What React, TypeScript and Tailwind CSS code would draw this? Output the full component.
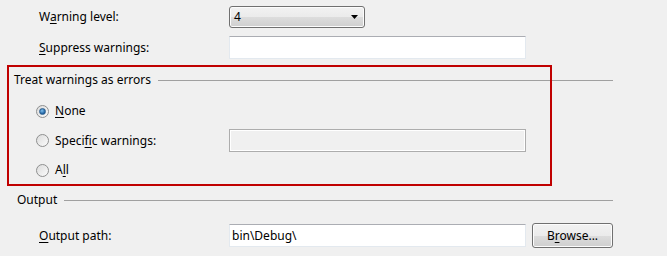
import React from 'react';

function Key({ children }: { children: React.ReactNode }) {
  return <span className="underline underline-offset-2 decoration-1">{children}</span>;
}

function Radio({ checked }: { checked?: boolean }) {
  return (
    <span className="w-[13px] h-[13px] rounded-full border border-[#8e8f8f] bg-gradient-to-br from-[#dcdcdc] to-[#fbfbfb] flex items-center justify-center shrink-0">
      {checked && (
        <span className="w-[7px] h-[7px] rounded-full bg-[radial-gradient(circle_at_40%_35%,#7fc0ee,#1c5e9e_70%)] border border-[#2d5f8e]" />
      )}
    </span>
  );
}

function TextBox({ value, disabled }: { value?: string; disabled?: boolean }) {
  if (disabled) {
    return (
      <div className="w-[297px] h-[23px] border border-[#adadad] bg-[#f0f0f0] shadow-[inset_1px_1px_0_#ffffff,inset_-1px_-1px_0_#ffffff]" />
    );
  }
  return (
    <div className="w-[297px] h-[23px] border border-[#e3e9ef] border-t-[#abadb3] bg-white flex items-center px-[2px] text-black">
      {value}
    </div>
  );
}

function Heading({ label }: { label: string }) {
  return (
    <div className="flex items-center h-[16px] pr-[54px]">
      <span>{label}</span>
      <div className="flex-1 h-px bg-[#a0a0a0] ml-[7px]" />
    </div>
  );
}

export default function App() {
  return (
    <div
      className="relative w-[667px] h-[256px] overflow-hidden bg-[#f0f0f0] text-[12px] text-black leading-none"
      style={{ fontFamily: '"Segoe UI", "Noto Sans", "Open Sans", sans-serif' }}
    >
      {/* General */}
      <div className="pt-[6px] pl-[39px] flex flex-col gap-[8px]">
        <div className="flex items-center">
          <span className="w-[190px]">
            W<Key>a</Key>rning level:
          </span>
          <div className="w-[136px] h-[22px] rounded-[3px] border border-[#707070] bg-[linear-gradient(#f2f2f2,#ebebeb_50%,#dddddd_50%,#cfcfcf)] shadow-[inset_0_0_0_1px_#fcfcfc] flex items-center pl-[4px] pr-[6px]">
            <span className="flex-1">4</span>
            <svg width="7" height="4" viewBox="0 0 7 4">
              <path d="M0 0h7L3.5 4z" fill="#000" />
            </svg>
          </div>
        </div>
        <div className="flex items-center">
          <span className="w-[190px]">
            <Key>S</Key>uppress warnings:
          </span>
          <TextBox />
        </div>
      </div>

      {/* Treat warnings as errors */}
      <div className="mt-[13px] pl-[14px]">
        <Heading label="Treat warnings as errors" />
      </div>
      <div className="pl-[36px] mt-[15px] flex flex-col">
        <div className="flex items-center h-[16px]">
          <Radio checked />
          <span className="ml-[6px]">
            <Key>N</Key>one
          </span>
        </div>
        <div className="flex items-center h-[23px] mt-[10px]">
          <Radio />
          <span className="ml-[6px] w-[174px]">
            Speci<Key>f</Key>ic warnings:
          </span>
          <TextBox disabled />
        </div>
        <div className="flex items-center h-[16px] mt-[10px]">
          <Radio />
          <span className="ml-[6px]">
            A<Key>l</Key>l
          </span>
        </div>
      </div>

      {/* Output */}
      <div className="mt-[14px] pl-[17px]">
        <Heading label="Output" />
      </div>
      <div className="mt-[15px] pl-[39px] flex items-center">
        <span className="w-[190px]">
          <Key>O</Key>utput path:
        </span>
        <TextBox value="bin\Debug\" />
        <button className="ml-[6px] w-[81px] h-[25px] rounded-[3px] border border-[#707070] bg-[linear-gradient(#f2f2f2,#ebebeb_50%,#dddddd_50%,#cfcfcf)] shadow-[inset_0_0_0_1px_#fcfcfc] text-black">
          B<Key>r</Key>owse...
        </button>
      </div>

      {/* highlight overlay */}
      <div className="absolute left-[7px] top-[65px] w-[545px] h-[121px] border-2 border-[#c00000] pointer-events-none" />
    </div>
  );
}
